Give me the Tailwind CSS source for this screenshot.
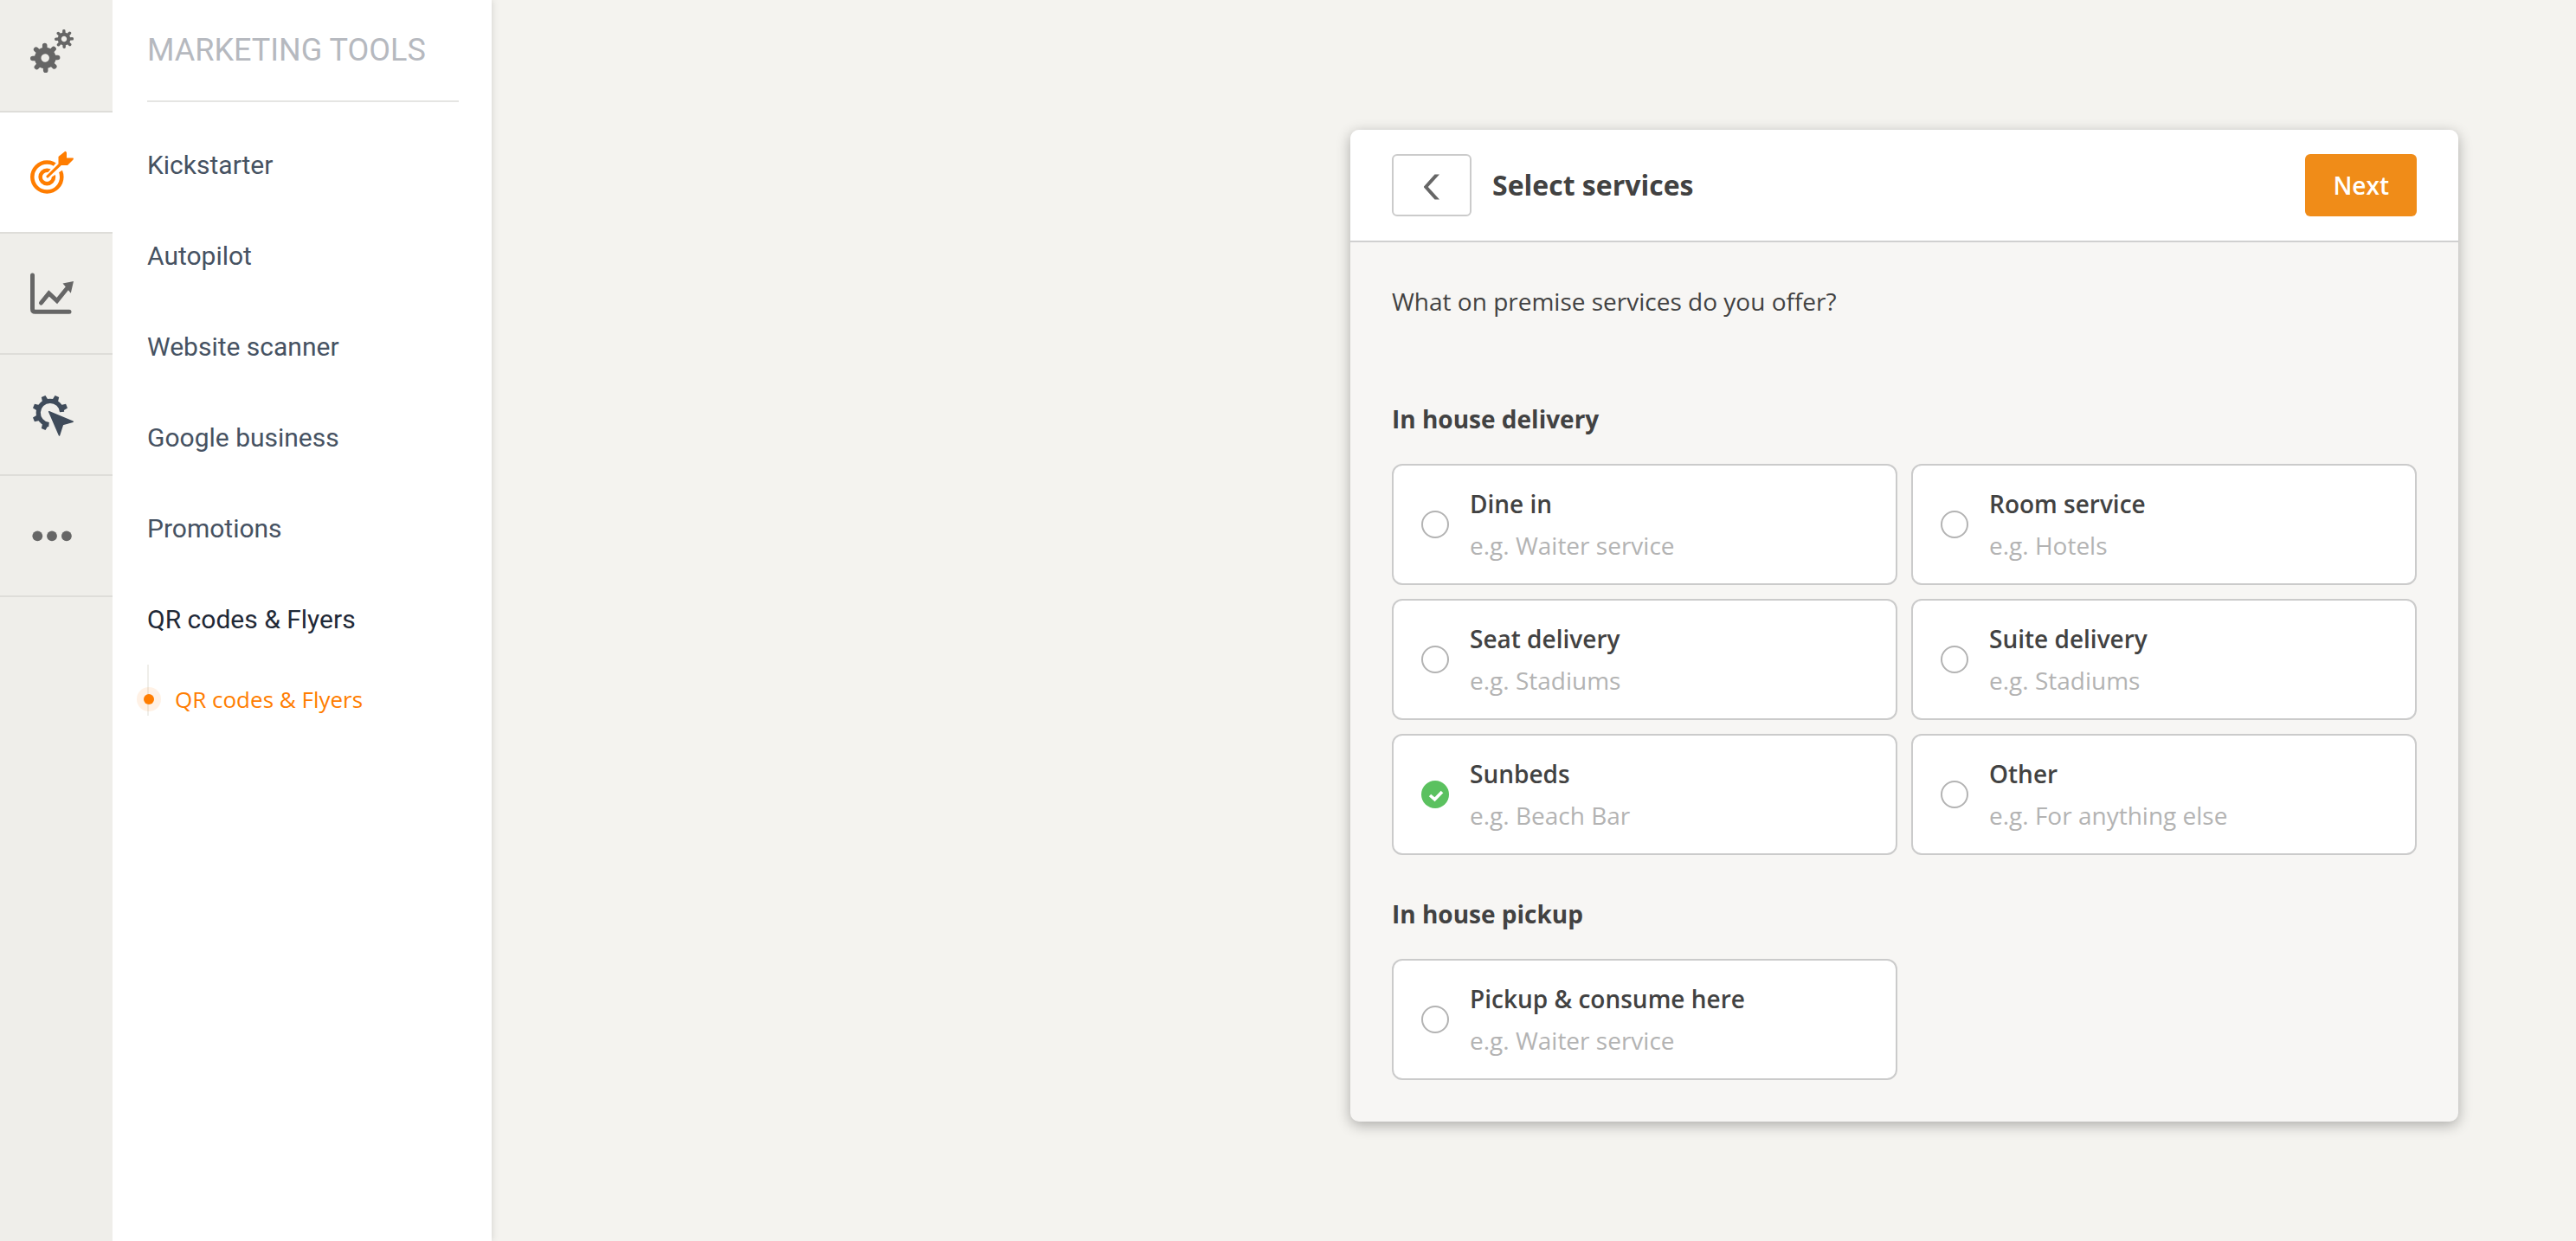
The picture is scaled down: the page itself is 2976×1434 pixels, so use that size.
<!DOCTYPE html>
<html lang="en">

<head>
    <meta charset="UTF-8">
    <meta name="viewport" content="width=device-width, initial-scale=1.0">
    <title>Select services</title>
    <script src="https://cdn.jsdelivr.net/npm/@tailwindcss/browser@4"></script>
</head>

<body class="flex min-h-screen bg-[#f4f3ef] font-['Open_Sans',sans-serif] text-[#424242]">

    <!-- icon rail -->
    <nav aria-label="Sections" class="z-10 w-[130px] shrink-0 bg-[#efeeea] text-[#666666]">
        <a href="#" aria-label="Setup" class="flex h-[130px] items-center justify-center border-b-2 border-[#deddd9] pr-2.5 pb-2.5">
            <svg class="size-[50px]" viewBox="0 0 50 50" fill="none" stroke="currentColor">
                <g transform="translate(17.2 33) rotate(-2)">
                    <circle r="8.5" stroke-width="7.5" />
                    <path stroke-width="5.6" stroke-linecap="round" d="M0-10V-14.4M0 10V14.4M-10 0H-14.4M10 0H14.4M7.5-7.5L10.2-10.2M-7.5-7.5L-10.2-10.2M7.5 7.5L10.2 10.2M-7.5 7.5L-10.2 10.2" />
                </g>
                <g transform="translate(39 11) rotate(-1)">
                    <circle r="5.3" stroke-width="4.2" />
                    <path stroke-width="3.5" stroke-linecap="round" d="M0-6V-9.3M0 6V9.3M-6 0H-9.3M6 0H9.3M4.5-4.5L6.6-6.6M-4.5-4.5L-6.6-6.6M4.5 4.5L6.6 6.6M-4.5 4.5L-6.6 6.6" />
                </g>
            </svg>
        </a>
        <a href="#" aria-label="Marketing tools" aria-current="page" class="flex h-[140px] items-center justify-center border-b-2 border-[#deddd9] bg-white pr-2.5 text-[#ff7d00]">
            <svg class="size-[50px]" viewBox="0 0 50 50" fill="none" stroke="currentColor">
                <circle cx="19.3" cy="30.5" r="17" stroke-width="4.5" />
                <circle cx="19.3" cy="30.5" r="7.7" stroke-width="4.5" />
                <path class="fill-white" stroke="none" d="M17.5 28.5L30 14L38 22L21 33Z" />
                <path fill="currentColor" stroke="none" d="M18.3 29.5L32.5 15.5V7L40.3 .8Q41.5 1 42 2.5V8.5H49.5Q50.3 9.5 49.5 10.5L43 17H35.8L20.5 31.6Q18.5 32 18.3 29.5Z" />
            </svg>
        </a>
        <a href="#" aria-label="Reports" class="flex h-[140px] items-center justify-center border-b-2 border-[#deddd9] pr-2.5">
            <svg class="size-[50px]" viewBox="0 0 50 50" fill="none" stroke="currentColor" stroke-width="5" stroke-linecap="round">
                <path d="M2.5 4V43Q2.5 46.3 5.5 46.3H45" />
                <path d="M12.5 36L21.5 25L30.800 33.5L43 18.5" />
                <path fill="currentColor" stroke="none" d="M50 11L37.5 13.5L40.5 17L46.8 24.8Z" />
            </svg>
        </a>
        <a href="#" aria-label="Integrations" class="flex h-[140px] items-center justify-center border-b-2 border-[#deddd9] pr-2.5 text-[#3f4b5a]">
            <svg class="size-[50px]" viewBox="0 0 50 50" fill="none" stroke="currentColor">
                <g transform="translate(23 23)">
                    <path stroke-width="5.2" d="M13.6-1A13.7 13.7 0 1 0-1.5 13.6" />
                    <g fill="currentColor" stroke="none">
                        <path transform="rotate(67.5)" d="M-3.4-15L-2.5-20.6H2.5L3.4-15Z" />
                        <path transform="rotate(22.5)" d="M-3.4-15L-2.5-20.6H2.5L3.4-15Z" />
                        <path transform="rotate(-22.5)" d="M-3.4-15L-2.5-20.6H2.5L3.4-15Z" />
                        <path transform="rotate(-67.5)" d="M-3.4-15L-2.5-20.6H2.5L3.4-15Z" />
                        <path transform="rotate(-112.5)" d="M-3.4-15L-2.5-20.6H2.5L3.4-15Z" />
                        <path transform="rotate(-157.5)" d="M-3.4-15L-2.5-20.6H2.5L3.4-15Z" />
                    </g>
                </g>
                <path class="fill-[#efeeea]" stroke="none" d="M17.5 17L36 24.500L46 28V34L33 50H27Z" />
                <path fill="currentColor" stroke-width="1.5" stroke-linejoin="round" d="M21.7 21.7L49.2 33.3L37.5 36.5L33.500 49Z" />
            </svg>
        </a>
        <a href="#" aria-label="More" class="flex h-[140px] items-center justify-center border-b-2 border-[#deddd9] pr-2.5">
            <svg class="size-[50px]" viewBox="0 0 50 50" fill="currentColor">
                <circle cx="8.3" cy="25.3" r="5.9" />
                <circle cx="25" cy="25.3" r="5.9" />
                <circle cx="41.9" cy="25.3" r="5.9" />
            </svg>
        </a>
    </nav>

    <!-- section menu -->
    <aside class="w-[438px] shrink-0 bg-white pr-[38px] pl-10 font-[Roboto,sans-serif] shadow-[0_0_8px_rgba(0,0,0,0.15)]">
        <h2 class="flex h-[118px] items-center border-b-2 border-[#e5e5e3] text-4xl text-[#b6b9bf]">MARKETING TOOLS</h2>
        <ul class="mt-5 text-[30px] text-[#465262]">
            <li><a href="#" class="flex h-[105px] items-center">Kickstarter</a></li>
            <li><a href="#" class="flex h-[105px] items-center">Autopilot</a></li>
            <li><a href="#" class="flex h-[105px] items-center">Website scanner</a></li>
            <li><a href="#" class="flex h-[105px] items-center">Google business</a></li>
            <li><a href="#" class="flex h-[105px] items-center">Promotions</a></li>
            <li>
                <a href="#" class="flex h-[105px] items-center text-[#1f2937]">QR codes &amp; Flyers</a>
                <ul class="relative font-['Open_Sans',sans-serif] text-[26px]">
                    <li class="absolute top-0 left-0 h-[59px] w-0.5 bg-[#efeeea]" role="presentation"></li>
                    <li>
                        <a href="#" class="relative -ml-3 flex h-20 items-center gap-4 text-[#ff7d00]">
                            <span class="flex size-7 items-center justify-center rounded-full bg-[#ff7d00]/10">
                                <span class="size-3 rounded-full bg-[#ff7d00]"></span>
                            </span>
                            QR codes &amp; Flyers
                        </a>
                    </li>
                </ul>
            </li>
        </ul>
    </aside>

    <main class="flex-1 pt-[150px] pr-[136px] pb-10 pl-10">
        <form class="ml-auto max-w-[1280px] rounded-[10px] bg-[#f7f6f4] shadow-[0_4px_16px_rgba(0,0,0,0.3)]">
            <header class="flex h-[130px] items-center gap-6 rounded-t-[10px] border-b-2 border-[#d0d0d0] bg-white px-12">
                <button type="button" aria-label="Back" class="flex h-[72px] w-[92px] items-center justify-center rounded-md border-2 border-[#cbcbcb] pt-1">
                    <svg class="h-[30px] w-[18px]" viewBox="0 0 18 30" fill="#666666">
                        <path d="M12.5 .5H18L4.8 15L18 29.5H12.5L0 15.5V14.5Z" />
                    </svg>
                </button>
                <h1 class="text-[32px] font-bold">Select services</h1>
                <button type="submit" class="ml-auto h-[72px] rounded-md bg-[#f08c18] px-8 text-[28px] font-semibold text-white">Next</button>
            </header>

            <div class="p-12 text-[28px] leading-10">
                <p>What on premise services do you offer?</p>

                <h2 class="mt-24 font-bold">In house delivery</h2>
                <div class="mt-8 grid grid-cols-2 gap-4">
                    <label class="flex h-[140px] items-center gap-6 rounded-xl border-2 border-[#cbcbcb] bg-white px-8 leading-[48px]">
                        <input type="checkbox" class="size-8 appearance-none rounded-full border-2 border-[#b3b3b3]">
                        <span><span class="block font-semibold">Dine in</span><span class="block text-[#b3b3b3]">e.g. Waiter service</span></span>
                    </label>
                    <label class="flex h-[140px] items-center gap-6 rounded-xl border-2 border-[#cbcbcb] bg-white px-8 leading-[48px]">
                        <input type="checkbox" class="size-8 appearance-none rounded-full border-2 border-[#b3b3b3]">
                        <span><span class="block font-semibold">Room service</span><span class="block text-[#b3b3b3]">e.g. Hotels</span></span>
                    </label>
                    <label class="flex h-[140px] items-center gap-6 rounded-xl border-2 border-[#cbcbcb] bg-white px-8 leading-[48px]">
                        <input type="checkbox" class="size-8 appearance-none rounded-full border-2 border-[#b3b3b3]">
                        <span><span class="block font-semibold">Seat delivery</span><span class="block text-[#b3b3b3]">e.g. Stadiums</span></span>
                    </label>
                    <label class="flex h-[140px] items-center gap-6 rounded-xl border-2 border-[#cbcbcb] bg-white px-8 leading-[48px]">
                        <input type="checkbox" class="size-8 appearance-none rounded-full border-2 border-[#b3b3b3]">
                        <span><span class="block font-semibold">Suite delivery</span><span class="block text-[#b3b3b3]">e.g. Stadiums</span></span>
                    </label>
                    <label class="flex h-[140px] items-center gap-6 rounded-xl border-2 border-[#cbcbcb] bg-white px-8 leading-[48px]">
                        <span class="grid size-8">
                            <input type="checkbox" checked class="col-start-1 row-start-1 size-8 appearance-none rounded-full bg-[#5bc15f]">
                            <svg class="pointer-events-none col-start-1 row-start-1 size-8" viewBox="0 0 32 32" fill="none" stroke="white" stroke-width="3.6">
                                <path d="M10 17L15.500 21.700L24 13" />
                            </svg>
                        </span>
                        <span><span class="block font-semibold">Sunbeds</span><span class="block text-[#b3b3b3]">e.g. Beach Bar</span></span>
                    </label>
                    <label class="flex h-[140px] items-center gap-6 rounded-xl border-2 border-[#cbcbcb] bg-white px-8 leading-[48px]">
                        <input type="checkbox" class="size-8 appearance-none rounded-full border-2 border-[#b3b3b3]">
                        <span><span class="block font-semibold">Other</span><span class="block text-[#b3b3b3]">e.g. For anything else</span></span>
                    </label>
                </div>

                <h2 class="mt-12 font-bold">In house pickup</h2>
                <div class="mt-8 grid grid-cols-2 gap-4">
                    <label class="flex h-[140px] items-center gap-6 rounded-xl border-2 border-[#cbcbcb] bg-white px-8 leading-[48px]">
                        <input type="checkbox" class="size-8 appearance-none rounded-full border-2 border-[#b3b3b3]">
                        <span><span class="block font-semibold">Pickup &amp; consume here</span><span class="block text-[#b3b3b3]">e.g. Waiter service</span></span>
                    </label>
                </div>
            </div>
        </form>
    </main>

</body>

</html>
